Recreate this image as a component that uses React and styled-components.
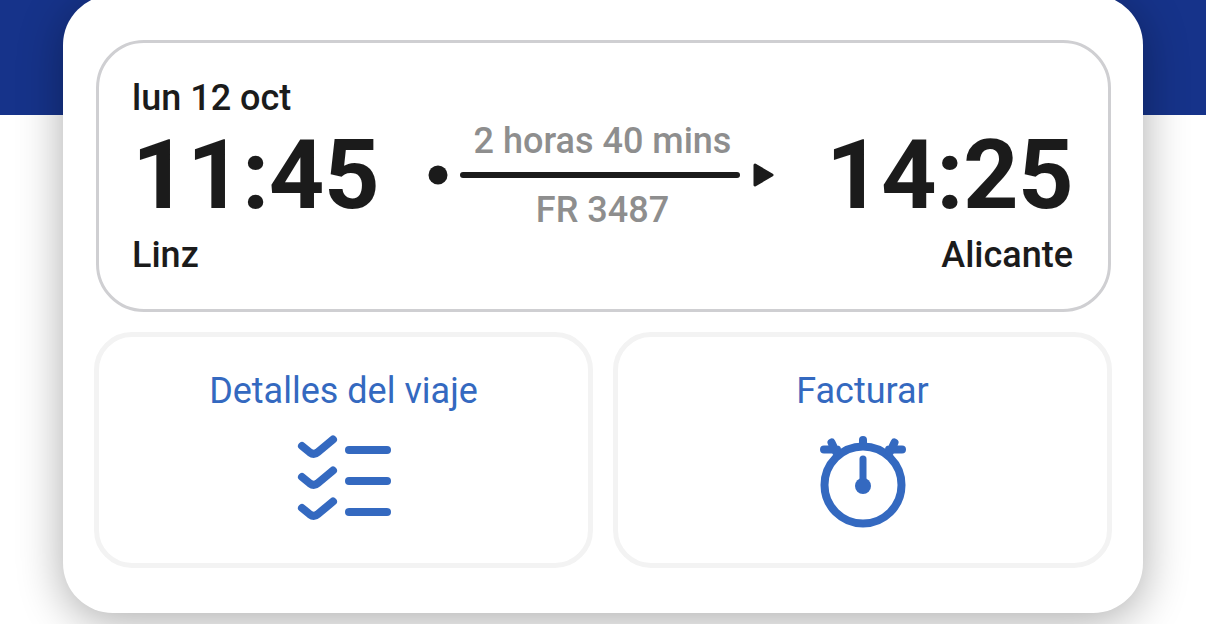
import React from "react";
import styled, { createGlobalStyle } from "styled-components";

const GlobalStyle = createGlobalStyle`
  html, body {
    margin: 0;
    padding: 0;
    background: #fff;
  }
  body {
    font-family: Roboto, "Liberation Sans", sans-serif;
  }
`;

const Page = styled.div`
  width: 1206px;
  height: 624px;
  overflow: hidden;
  background: linear-gradient(#16338a 115px, #fff 115px);
`;

const Card = styled.main`
  box-sizing: border-box;
  width: 1080px;
  height: 618px;
  margin: -5px 0 0 63px;
  padding: 45px 31px;
  background: #fff;
  border-radius: 50px;
  box-shadow: 0 8px 46px rgba(0, 0, 0, 0.33);
  display: flex;
  flex-direction: column;
  gap: 20px;
`;

const FlightPanel = styled.section`
  box-sizing: border-box;
  height: 273px;
  margin: 0 1px 0 2px;
  padding: 34px 35px 0 33px;
  border: 3px solid #cfcfd2;
  border-radius: 48px;
  color: #1b1b1b;
`;

const DateLabel = styled.div`
  font-size: 36px;
  font-weight: 500;
  line-height: 42px;
`;

const Times = styled.div`
  display: flex;
  justify-content: space-between;
  align-items: flex-start;
`;

const Time = styled.div`
  font-size: 97px;
  font-weight: 700;
  line-height: 100px;
  letter-spacing: -0.6px;
  margin-top: 6px;
`;

const Route = styled.div`
  width: 350px;
  margin-top: 1px;
  display: flex;
  flex-direction: column;
  align-items: center;
  color: #8e8e8e;
  font-size: 36px;
  font-weight: 500;
  line-height: 42px;
`;

const RouteLine = styled.svg`
  display: block;
  width: 350px;
  height: 26px;
  margin: 0 0 1px;
`;

const Places = styled.div`
  display: flex;
  justify-content: space-between;
  font-size: 36px;
  font-weight: 500;
  line-height: 42px;
  margin-top: 3px;
`;

const Actions = styled.div`
  display: grid;
  grid-template-columns: 499px 499px;
  gap: 20px;
`;

const ActionButton = styled.button`
  box-sizing: border-box;
  height: 236px;
  padding: 33px 0 0;
  border: 5px solid #f3f3f3;
  border-radius: 38px;
  background: #fff;
  color: #3469c0;
  font-family: inherit;
  font-size: 36px;
  font-weight: 400;
  line-height: 42px;
  display: flex;
  flex-direction: column;
  align-items: center;
  gap: 22px;
`;

const ActionIcon = styled.svg`
  display: block;
  width: 100px;
  height: 100px;
  overflow: visible;
`;

const ChecklistIcon = () => (
  <ActionIcon viewBox="0 0 100 100" fill="none" stroke="currentColor" strokeLinecap="round" strokeLinejoin="round">
    <g strokeWidth="8">
      <path d="M8 12 L16 18.5 Q20 21.5 24 18 L39 5.5" />
      <path d="M8 43 L16 49.5 Q20 52.5 24 49 L39 36.5" />
      <path d="M8 74 L16 80.5 Q20 83.5 24 80 L39 67.5" />
      <path d="M55 16 H93" />
      <path d="M55 47 H93" />
      <path d="M55 78 H93" />
    </g>
  </ActionIcon>
);

const StopwatchIcon = () => (
  <ActionIcon viewBox="0 0 100 100" fill="none" stroke="currentColor" strokeLinecap="round">
    <circle cx="50" cy="51" r="38.5" strokeWidth="8" />
    <path d="M50 6 V12" strokeWidth="8" />
    <path d="M18.5 8.5 L23 18 M11 15.5 L24 15.5" strokeWidth="8" />
    <path d="M81.5 8.5 L77 18 M89 15.5 L76 15.5" strokeWidth="8" />
    <path d="M50 25 V50" strokeWidth="7" />
    <circle cx="50" cy="52" r="8" fill="currentColor" stroke="none" />
  </ActionIcon>
);

export default function App() {
  return (
    <Page>
      <GlobalStyle />
      <Card>
        <FlightPanel>
          <DateLabel>lun 12 oct</DateLabel>
          <Times>
            <Time>11:45</Time>
            <Route>
              <span>2 horas 40 mins</span>
              <RouteLine viewBox="0 0 350 26">
                <circle cx="10" cy="13" r="9.5" fill="#1b1b1b" />
                <path d="M35 13 H309" stroke="#1b1b1b" strokeWidth="6" strokeLinecap="round" />
                <path d="M327 3 L344 13 L327 23 Z" fill="#1b1b1b" stroke="#1b1b1b" strokeWidth="3" strokeLinejoin="round" />
              </RouteLine>
              <span>FR 3487</span>
            </Route>
            <Time>14:25</Time>
          </Times>
          <Places>
            <span>Linz</span>
            <span>Alicante</span>
          </Places>
        </FlightPanel>
        <Actions>
          <ActionButton>
            Detalles del viaje
            <ChecklistIcon />
          </ActionButton>
          <ActionButton>
            Facturar
            <StopwatchIcon />
          </ActionButton>
        </Actions>
      </Card>
    </Page>
  );
}
